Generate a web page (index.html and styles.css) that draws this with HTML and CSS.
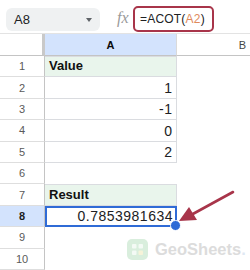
FILE: index.html
```html
<!DOCTYPE html>
<html>
<head>
<meta charset="utf-8">
<link rel="stylesheet" href="styles.css">
</head>
<body>
<div class="page">
  <div class="toolbar">
    <div class="namebox"><span class="ref">A8</span><span class="caret"></span></div>
    <span class="fx">fx</span>
    <div class="formula">=ACOT(<span class="arg">A2</span>)</div>
  </div>
  <div class="sheet">
    <div class="corner"></div>
    <div class="colhead sel">A</div>
    <div class="colhead">B</div>

    <div class="rowhead">1</div><div class="cell label top">Value</div><div class="cell"></div>
    <div class="rowhead">2</div><div class="cell num box">1</div><div class="cell"></div>
    <div class="rowhead">3</div><div class="cell num box">-1</div><div class="cell"></div>
    <div class="rowhead">4</div><div class="cell num box">0</div><div class="cell"></div>
    <div class="rowhead">5</div><div class="cell num box">2</div><div class="cell"></div>
    <div class="rowhead">6</div><div class="cell"></div><div class="cell"></div>
    <div class="rowhead">7</div><div class="cell label top">Result</div><div class="cell"></div>
    <div class="rowhead sel">8</div><div class="cell num active">0.7853981634<span class="handle"></span></div><div class="cell"></div>
    <div class="rowhead">9</div><div class="cell"></div><div class="cell"></div>
    <div class="rowhead">10</div><div class="cell"></div><div class="cell"></div>
  </div>

  <svg class="arrow" width="70" height="40" viewBox="0 0 70 40">
    <line x1="56" y1="4" x2="14" y2="27" stroke="#a8354a" stroke-width="2.6" stroke-linecap="round"/>
    <polygon points="2,33 12,19 20,32" fill="#a8354a"/>
  </svg>

  <div class="watermark">
    <svg width="21" height="21" viewBox="0 0 21 21">
      <rect x="0" y="0" width="21" height="21" rx="5" fill="#d9eedd"/>
      <rect x="5" y="5" width="4.5" height="4.5" rx="1" fill="#f4faf5"/>
      <rect x="11.5" y="5" width="4.5" height="4.5" rx="1" fill="#f4faf5"/>
      <rect x="5" y="11.5" width="4.5" height="4.5" rx="1" fill="#f4faf5"/>
      <rect x="11.5" y="11.5" width="4.5" height="4.5" rx="1" fill="#f6f3d9"/>
    </svg>
    <span class="wm-text">GeoSheets<span class="wm-dot">.</span></span>
  </div>
</div>
</body>
</html>
```
FILE: styles.css
```css
html, body {
  margin: 0;
  padding: 0;
  background: #ffffff;
}
.page {
  position: relative;
  width: 250px;
  height: 270px;
  overflow: hidden;
  font-family: "Liberation Sans", Arial, sans-serif;
  color: #202124;
}
.toolbar {
  height: 33px;
  display: flex;
  align-items: flex-start;
}
.namebox {
  margin: 8px 0 0 6px;
  width: 94px;
  height: 23px;
  box-sizing: border-box;
  background: #eff1f2;
  border-radius: 6px;
  display: flex;
  align-items: center;
  justify-content: space-between;
  padding: 0 8px 0 8px;
}
.ref {
  font-size: 13px;
}
.caret {
  width: 0;
  height: 0;
  border-left: 3.5px solid transparent;
  border-right: 3.5px solid transparent;
  border-top: 4px solid #5f6368;
}
.fx {
  margin: 9px 0 0 17px;
  font-family: "Liberation Serif", serif;
  font-style: italic;
  font-size: 16px;
  color: #9a9a9a;
  width: 16px;
}
.formula {
  margin: 6px 0 0 0;
  width: 81px;
  height: 26px;
  box-sizing: border-box;
  border: 2px solid #a8354a;
  border-radius: 5px;
  font-size: 12px;
  letter-spacing: 0.2px;
  line-height: 22px;
  padding-left: 5px;
}
.arg {
  color: #e08a5b;
}
.sheet {
  display: grid;
  grid-template-columns: 45px 132px 132px;
  grid-template-rows: 22px repeat(10, 21.4px);
  border-top: 1px solid #e3e3e3;
}
.corner {
  border-right: 3px solid #c9c9c9;
  border-bottom: 1px solid #c4c4c4;
  box-sizing: border-box;
}
.colhead {
  display: flex;
  align-items: center;
  justify-content: center;
  font-size: 11px;
  color: #444746;
  border-bottom: 1px solid #c4c4c4;
  border-right: 1px solid #dadada;
  box-sizing: border-box;
  padding-top: 1px;
}
.colhead.sel {
  background: #d3e3fd;
  color: #0b0b0b;
  font-weight: bold;
}
.rowhead {
  display: flex;
  align-items: center;
  justify-content: center;
  font-size: 11px;
  color: #5a5a5a;
  border-right: 1px solid #c4c4c4;
  border-bottom: 1px solid #dedede;
  box-sizing: border-box;
}
.rowhead.sel {
  background: #d3e3fd;
  color: #1d1d1d;
  font-weight: bold;
}
.cell {
  box-sizing: border-box;
  font-size: 13px;
  display: flex;
  align-items: flex-end;
  padding: 0 4px 3px 4px;
  position: relative;
}
.label {
  background: #e9f5ec;
  font-weight: bold;
  border-right: 1px solid #dadce0;
  border-bottom: 1px solid #dadce0;
  padding-left: 4px;
  color: #111;
}
.label.top {
  border-top: 1px solid #dadce0;
}
.num {
  justify-content: flex-end;
  font-size: 14px;
  letter-spacing: 0.5px;
  padding-right: 3.5px;
  padding-bottom: 2px;
}
.box {
  border-right: 1px solid #dadce0;
  border-bottom: 1px solid #dadce0;
}
.active {
  border: 2px solid #2f6bd6;
  padding-right: 2px;
  padding-bottom: 1px;
}
.handle {
  position: absolute;
  right: -6px;
  bottom: -6px;
  width: 9px;
  height: 9px;
  border-radius: 50%;
  background: #2f6bd6;
  border: 1px solid #ffffff;
}
.arrow {
  position: absolute;
  left: 177px;
  top: 188px;
}
.watermark {
  position: absolute;
  left: 127px;
  top: 239px;
  display: flex;
  align-items: center;
  gap: 7px;
}
.wm-text {
  font-family: "Liberation Sans", Arial, sans-serif;
  font-weight: bold;
  font-size: 16.5px;
  color: #dcdcdc;
}
.wm-dot {
  color: #dfe8f3;
}
```
